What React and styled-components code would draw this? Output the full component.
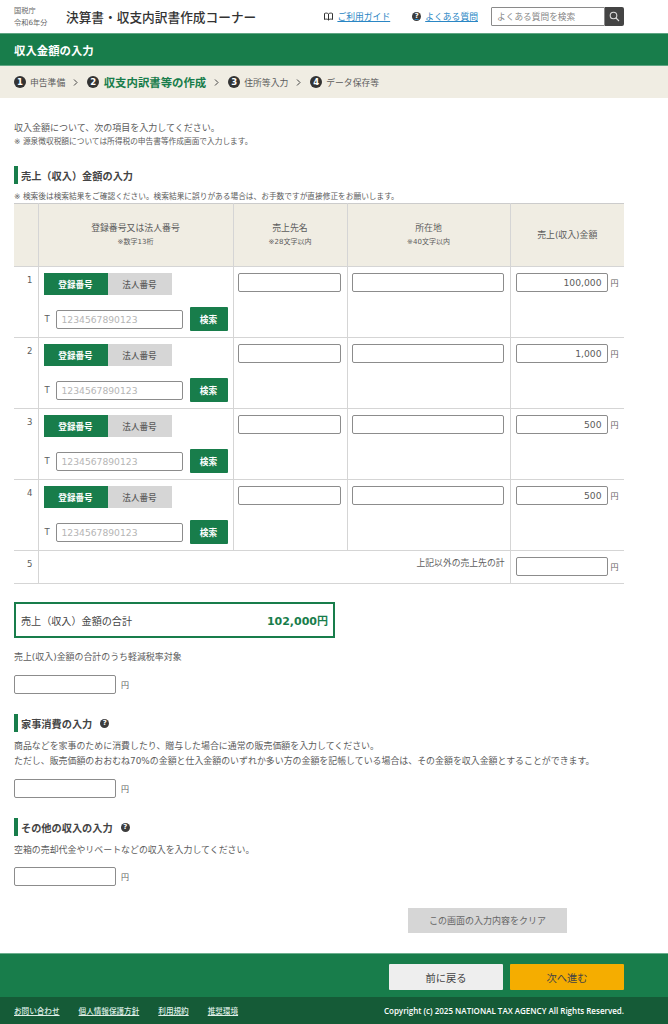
import React from 'react';
import styled, { createGlobalStyle } from 'styled-components';

const GlobalStyle = createGlobalStyle`
    html, body {
        margin: 0;
        padding: 0;
        background: #fff;
    }
    * {
        box-sizing: border-box;
    }
`;

const green = '#187d4b';
const textColor = '#5c5c5c';
const fontStack = `"DejaVu Sans", "Noto Sans CJK JP", sans-serif`;

const Page = styled.div`
    width: 668px;
    height: 1024px;
    overflow: hidden;
    display: flex;
    flex-direction: column;
    font-family: ${fontStack};
    color: ${textColor};
`;

const Header = styled.header`
    height: 33px;
    padding: 0 44px 0 14px;
    display: flex;
    align-items: center;
`;

const Agency = styled.div`
    width: 52px;
    font-size: 7.2px;
    line-height: 12px;
    color: #666;
    margin-top: 1px;
    white-space: nowrap;
`;

const CornerTitle = styled.div`
    font-size: 12.7px;
    font-weight: 500;
    color: #333;
    white-space: nowrap;
`;

const HeaderLinks = styled.nav`
    margin-left: auto;
    display: flex;
    align-items: center;
`;

const GuideLink = styled.a`
    display: flex;
    align-items: center;
    gap: 4px;
    margin-right: ${props => props.$gap}px;
    font-size: 8.8px;
    color: #2a86c4;
    text-decoration: underline;
    white-space: nowrap;
`;

const SearchBox = styled.div`
    display: flex;
    width: 133px;
    height: 19px;
`;

const SearchInput = styled.input`
    width: 114px;
    height: 19px;
    padding: 0 5px;
    border: 1px solid #8a8a8a;
    border-radius: 1px 0 0 1px;
    font-family: "Noto Sans CJK JP", sans-serif;
    font-size: 8.7px;
    outline: none;
    &::placeholder {
        color: #888;
        opacity: 1;
    }
`;

const SearchButton = styled.button`
    width: 19px;
    height: 19px;
    padding: 0;
    border: 0;
    border-radius: 0 2px 2px 0;
    background: #444;
    display: flex;
    align-items: center;
    justify-content: center;
`;

const TitleBar = styled.div`
    height: 33px;
    padding: 0 14px;
    display: flex;
    align-items: center;
    background: ${green};
    border-top: 1px solid #5fa583;
    border-bottom: 1px solid #5fa583;
    color: #fff;
    font-size: 11.4px;
    font-weight: 700;
`;

const Steps = styled.ol`
    height: 32px;
    margin: 0;
    padding: 0 14px;
    list-style: none;
    display: flex;
    align-items: center;
    background: #f0ede3;
`;

const Step = styled.li`
    display: flex;
    align-items: center;
    white-space: nowrap;
    font-size: ${props => (props.$current ? '11.4px' : '8.8px')};
    font-weight: ${props => (props.$current ? 700 : 400)};
    color: ${props => (props.$current ? green : textColor)};
`;

const StepNumber = styled.span`
    width: 12px;
    height: 12px;
    margin-right: ${props => (props.$current ? '4.500px' : '4px')};
    border-radius: 50%;
    background: #333;
    color: #fff;
    font-family: ${fontStack};
    font-size: 8.500px;
    font-weight: 700;
    display: flex;
    align-items: center;
    justify-content: center;
`;

const StepArrow = styled.svg`
    width: 5px;
    height: 7px;
    margin: 0 9px 0 8px;
`;

const Content = styled.main`
    flex: 1;
    padding: 24px 44px 0 14px;
`;

const Lead = styled.p`
    margin: 0;
    font-size: 9px;
    line-height: 12px;
`;

const Note = styled.p`
    margin: ${props => props.$top}px 0 0;
    font-size: 7.7px;
    line-height: 11px;
    white-space: nowrap;
`;

const SectionTitle = styled.h2`
    height: 18px;
    margin: ${props => props.$top}px 0 0;
    padding-left: 3px;
    border-left: 4px solid ${green};
    display: flex;
    align-items: center;
    gap: 8px;
    font-size: 10.2px;
    font-weight: 700;
    color: #444;
`;

const SalesTable = styled.table`
    width: 610px;
    margin-top: 1px;
    border-collapse: collapse;
    table-layout: fixed;
    font-size: 8.9px;
    border-top: 1px solid #ccc;
    border-bottom: 1px solid #ccc;

    td, th {
        padding: 0;
        border-bottom: 1px solid #d5d5d5;
    }
    td + td, th + th {
        border-left: 1px solid #d5d5d5;
    }
`;

const HeadCell = styled.th`
    height: 63px;
    background: #f0ede3;
    font-weight: 400;
    text-align: center;
    vertical-align: middle;
    line-height: 15px;
`;

const HeadNote = styled.small`
    display: block;
    font-size: 7px;
    line-height: 13px;
`;

const NumberCell = styled.td`
    height: ${props => props.$height}px;
    padding: 8px 5px 0 0 !important;
    text-align: right;
    vertical-align: top;
    font-family: ${fontStack};
    font-size: 8.5px;
`;

const InputCell = styled.td`
    vertical-align: top;
    padding: 6px 0 0 ${props => props.$left || 5}px !important;
`;

const NumberStack = styled.div`
    display: flex;
    flex-direction: column;
`;

const Toggle = styled.div`
    display: flex;
    width: 128px;
    height: 22px;
`;

const ToggleOption = styled.button`
    width: 64px;
    height: 22px;
    padding: 0;
    border: 0;
    background: ${props => (props.$active ? green : '#d6d6d6')};
    color: ${props => (props.$active ? '#fff' : textColor)};
    font-family: "Noto Sans CJK JP", sans-serif;
    font-size: 8.6px;
    font-weight: ${props => (props.$active ? 700 : 500)};
`;

const NumberRow = styled.div`
    height: 24px;
    margin-top: 12px;
    display: flex;
    align-items: center;
    font-family: ${fontStack};
    font-size: 8.5px;
`;

const Prefix = styled.span`
    width: 12px;
    padding-left: 1px;
`;

const TextInput = styled.input`
    display: block;
    width: ${props => props.$width}px;
    height: 19px;
    padding: 0 5px;
    border: 1px solid #8c8c8c;
    border-radius: 2px;
    background: #fff;
    color: #5c5c5c;
    font-family: ${fontStack};
    font-size: 9.2px;
    text-align: ${props => (props.$right ? 'right' : 'left')};
    outline: none;
    &::placeholder {
        color: #b5b5b5;
        opacity: 1;
    }
`;

const SearchRowButton = styled.button`
    width: 38px;
    height: 24px;
    margin-left: 7px;
    padding: 0;
    border: 0;
    border-radius: 1px;
    background: ${green};
    color: #fff;
    font-family: "Noto Sans CJK JP", sans-serif;
    font-size: 8.7px;
    font-weight: 700;
`;

const AmountRow = styled.div`
    display: flex;
    align-items: center;
    gap: 3px;
    font-size: 8px;
`;

const OtherLabel = styled.td`
    padding: 5px 5px 0 0 !important;
    text-align: right;
    vertical-align: top;
    font-size: 8.8px;
`;

const TotalBox = styled.div`
    width: 321px;
    height: 36px;
    margin-top: 18px;
    padding: 0 5px;
    border: 2px solid ${green};
    display: flex;
    align-items: center;
    justify-content: space-between;
    font-size: 10.1px;
    color: #444;
`;

const TotalValue = styled.strong`
    color: ${green};
    font-family: ${fontStack};
    font-size: 11px;
    font-weight: 700;
`;

const FieldLabel = styled.p`
    margin: ${props => props.$top}px 0 0;
    font-size: 8.93px;
    line-height: ${props => props.$line || 12}px;
    white-space: nowrap;
`;

const YenField = styled(AmountRow)`
    margin-top: ${props => props.$top}px;
    gap: 5px;
`;

const HelpDot = styled.span`
    width: 9px;
    height: 9px;
    border-radius: 50%;
    background: #3c3c3c;
    color: #fff;
    font-family: ${fontStack};
    font-size: 7px;
    font-weight: 700;
    line-height: 1;
    display: inline-flex;
    align-items: center;
    justify-content: center;
`;

const ClearRow = styled.div`
    margin-top: 22px;
    display: flex;
    justify-content: flex-end;
    padding-right: 57px;
`;

const ClearButton = styled.button`
    width: 159px;
    height: 25px;
    padding: 0;
    border: 0;
    background: #d6d6d6;
    color: #666;
    font-family: "Noto Sans CJK JP", sans-serif;
    font-size: 9px;
`;

const ActionBar = styled.div`
    height: 44px;
    padding: 10px 44px 0 0;
    display: flex;
    justify-content: flex-end;
    gap: 7px;
    background: ${green};
    border-top: 1px solid #6caf8e;
`;

const ActionButton = styled.button`
    width: 114px;
    height: 26px;
    padding: 0;
    border: 0;
    border-radius: 1px;
    background: ${props => (props.$primary ? '#f5ad00' : '#eee')};
    color: #444;
    font-family: "Noto Sans CJK JP", sans-serif;
    font-size: 10.3px;
`;

const Footer = styled.footer`
    height: 27px;
    padding: 0 44px 0 14px;
    display: flex;
    align-items: center;
    justify-content: space-between;
    background: #155b37;
    color: #fff;
    font-size: 7.6px;
`;

const FooterLinks = styled.div`
    display: flex;
    gap: 19px;
`;

const FooterLink = styled.a`
    color: #dfeee6;
    text-decoration: underline;
    font-weight: 500;
`;

const Copyright = styled.span`
    font-family: "Open Sans", sans-serif;
    font-size: 8px;
    font-weight: 600;
    white-space: nowrap;
`;

const BookIcon = () => (
    <svg width="9" height="9" viewBox="0 0 9 9" fill="none" stroke="#333" strokeWidth="1">
        <path d="M.5 1.500C2 .8 3.500 1 4.500 2c1-1 2.500-1.200 4-.5v6c-1.500-.7-3-.5-4 .5-1-1-2.500-1.200-4-.5zM4.500 2v6" />
    </svg>
);

const SearchIcon = () => (
    <svg width="11" height="11" viewBox="0 0 11 11" fill="none" stroke="#ddd" strokeWidth="1.100">
        <circle cx="4.500" cy="4.500" r="3.300" />
        <path d="M7 7l3 3" />
    </svg>
);

const Arrow = () => (
    <StepArrow viewBox="0 0 5 7" fill="none" stroke="#444" strokeWidth="1">
        <path d="M1 .5l3 3-3 3" />
    </StepArrow>
);

const steps = [
    { label: '申告準備' },
    { label: '収支内訳書等の作成', current: true },
    { label: '住所等入力' },
    { label: 'データ保存等' },
];

const rows = [
    { id: 1, amount: '100,000' },
    { id: 2, amount: '1,000' },
    { id: 3, amount: '500' },
    { id: 4, amount: '500' },
];

const App = () => {
    return (
        <Page>
            <GlobalStyle />
            <Header>
                <Agency>国税庁<br />令和6年分</Agency>
                <CornerTitle>決算書・収支内訳書作成コーナー</CornerTitle>
                <HeaderLinks>
                    <GuideLink $gap={22}><BookIcon />ご利用ガイド</GuideLink>
                    <GuideLink $gap={13}><HelpDot>?</HelpDot>よくある質問</GuideLink>
                    <SearchBox>
                        <SearchInput placeholder="よくある質問を検索" />
                        <SearchButton><SearchIcon /></SearchButton>
                    </SearchBox>
                </HeaderLinks>
            </Header>

            <TitleBar>収入金額の入力</TitleBar>

            <Steps>
                {steps.map((step, index) => (
                    <React.Fragment key={step.label}>
                        <Step $current={step.current}>
                            <StepNumber $current={step.current}>{index + 1}</StepNumber>
                            {step.label}
                        </Step>
                        {index < steps.length - 1 && <Arrow />}
                    </React.Fragment>
                ))}
            </Steps>

            <Content>
                <Lead>収入金額について、次の項目を入力してください。</Lead>
                <Note $top={2}>※ 源泉徴収税額については所得税の申告書等作成画面で入力します。</Note>

                <SectionTitle $top={19}>売上（収入）金額の入力</SectionTitle>
                <Note $top={7}>※ 検索後は検索結果をご確認ください。検索結果に誤りがある場合は、お手数ですが直接修正をお願いします。</Note>

                <SalesTable>
                    <colgroup>
                        <col width="24" />
                        <col width="195" />
                        <col width="114" />
                        <col width="163" />
                        <col width="114" />
                    </colgroup>
                    <thead>
                        <tr>
                            <HeadCell />
                            <HeadCell>登録番号又は法人番号<HeadNote>※数字13桁</HeadNote></HeadCell>
                            <HeadCell>売上先名<HeadNote>※28文字以内</HeadNote></HeadCell>
                            <HeadCell>所在地<HeadNote>※40文字以内</HeadNote></HeadCell>
                            <HeadCell>売上(収入)金額</HeadCell>
                        </tr>
                    </thead>
                    <tbody>
                        {rows.map((row) => (
                            <tr key={row.id}>
                                <NumberCell $height={71}>{row.id}</NumberCell>
                                <InputCell>
                                    <NumberStack>
                                        <Toggle>
                                            <ToggleOption $active>登録番号</ToggleOption>
                                            <ToggleOption>法人番号</ToggleOption>
                                        </Toggle>
                                        <NumberRow>
                                            <Prefix>T</Prefix>
                                            <TextInput $width={127} placeholder="1234567890123" />
                                            <SearchRowButton>検索</SearchRowButton>
                                        </NumberRow>
                                    </NumberStack>
                                </InputCell>
                                <InputCell $left={4}><TextInput $width={103} /></InputCell>
                                <InputCell $left={4}><TextInput $width={152} /></InputCell>
                                <InputCell>
                                    <AmountRow>
                                        <TextInput $width={92} $right defaultValue={row.amount} />円
                                    </AmountRow>
                                </InputCell>
                            </tr>
                        ))}
                        <tr>
                            <NumberCell $height={33}>5</NumberCell>
                            <OtherLabel colSpan={3}>上記以外の売上先の計</OtherLabel>
                            <InputCell>
                                <AmountRow>
                                    <TextInput $width={92} $right />円
                                </AmountRow>
                            </InputCell>
                        </tr>
                    </tbody>
                </SalesTable>

                <TotalBox>
                    売上（収入）金額の合計
                    <TotalValue>102,000円</TotalValue>
                </TotalBox>

                <FieldLabel $top={13}>売上(収入)金額の合計のうち軽減税率対象</FieldLabel>
                <YenField $top={12}><TextInput $width={102} $right />円</YenField>

                <SectionTitle $top={20}>家事消費の入力 <HelpDot>?</HelpDot></SectionTitle>
                <FieldLabel $top={7} $line={15}>
                    商品などを家事のために消費したり、贈与した場合に通常の販売価額を入力してください。<br />
                    ただし、販売価額のおおむね70%の金額と仕入金額のいずれか多い方の金額を記帳している場合は、その金額を収入金額とすることができます。
                </FieldLabel>
                <YenField $top={10}><TextInput $width={102} $right />円</YenField>

                <SectionTitle $top={20}>その他の収入の入力 <HelpDot>?</HelpDot></SectionTitle>
                <FieldLabel $top={8}>空箱の売却代金やリベートなどの収入を入力してください。</FieldLabel>
                <YenField $top={11}><TextInput $width={102} $right />円</YenField>

                <ClearRow><ClearButton>この画面の入力内容をクリア</ClearButton></ClearRow>
            </Content>

            <ActionBar>
                <ActionButton>前に戻る</ActionButton>
                <ActionButton $primary>次へ進む</ActionButton>
            </ActionBar>

            <Footer>
                <FooterLinks>
                    <FooterLink>お問い合わせ</FooterLink>
                    <FooterLink>個人情報保護方針</FooterLink>
                    <FooterLink>利用規約</FooterLink>
                    <FooterLink>推奨環境</FooterLink>
                </FooterLinks>
                <Copyright>Copyright (c) 2025 NATIONAL TAX AGENCY All Rights Reserved.</Copyright>
            </Footer>
        </Page>
    );
};

export default App;
